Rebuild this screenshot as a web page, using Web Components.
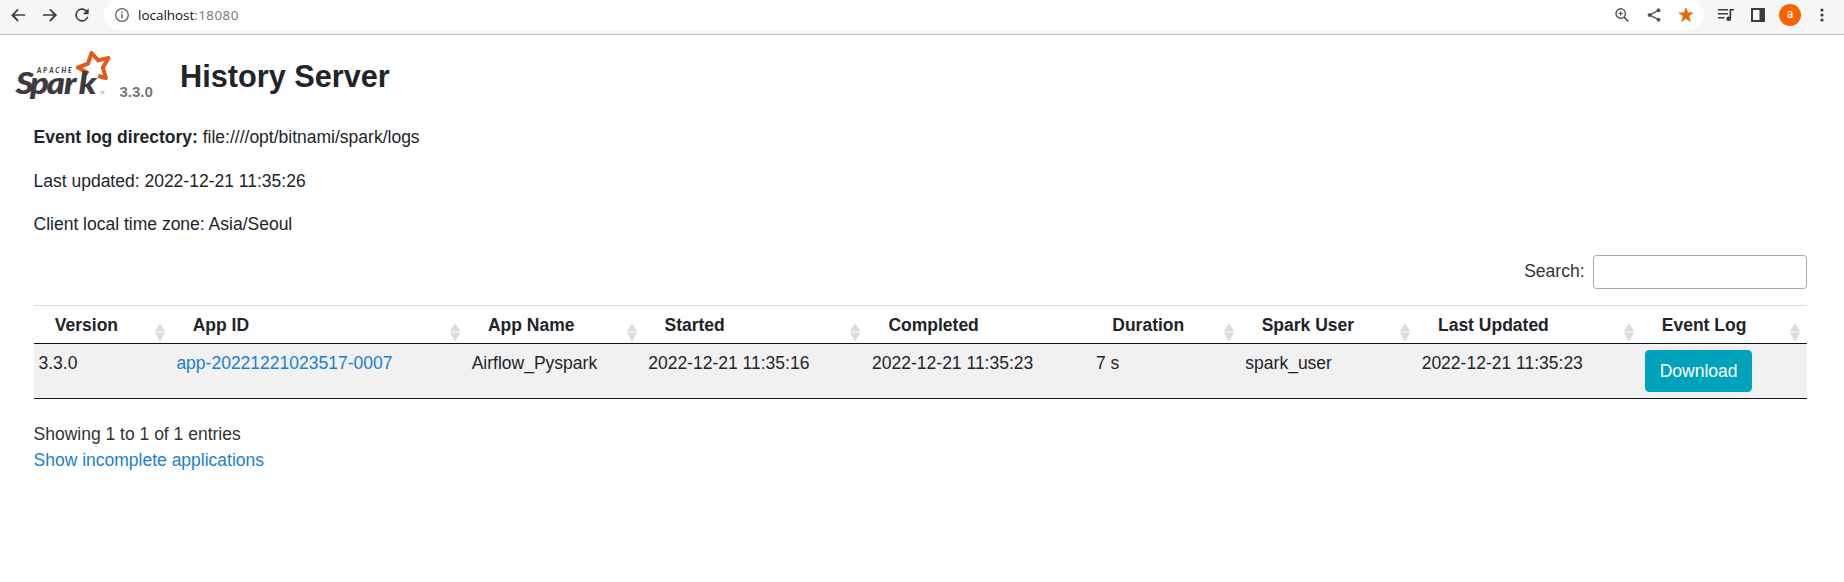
<!DOCTYPE html>
<html lang="en">
<head>
<meta charset="utf-8">
<title>History Server</title>
<style>
html,body{margin:0;padding:0;background:#fff}
body{font-family:"Liberation Sans",Arial,sans-serif;font-size:17.5px;line-height:26.4px;color:#212529;height:582px;overflow:hidden}
</style>
</head>
<body>
<history-page></history-page>
<script>
function define(name, html) {
  const tpl = document.createElement('template');
  tpl.innerHTML = html;
  customElements.define(name, class extends HTMLElement {
    connectedCallback() {
      if (this.shadowRoot) return;
      this.attachShadow({mode: 'open'}).appendChild(tpl.content.cloneNode(true));
    }
  });
}

define('browser-bar', `
<style>
:host{display:flex;box-sizing:border-box;height:35px;background:#f6f6f6;border-bottom:1px solid #bbb;align-items:flex-start}
svg{display:block;flex:none}
.nav{display:flex;gap:12px;padding:5px 13px 0 8px;width:104px;box-sizing:border-box}
.pill{display:flex;align-items:center;box-sizing:border-box;width:1600px;height:30px;border-radius:15px;background:#fff;padding:0 8px 0 10px;color:#111;font:13.5px/30px "Open Sans","Noto Sans",sans-serif}
.url{flex:1;padding-left:8px;letter-spacing:-.03px}
.url span{color:#777;letter-spacing:.4px}
.acts,.tools{display:flex;align-items:center;gap:12px}
.tools{height:30px;padding-left:12px}
.av{width:22px;height:22px;margin:0 -1px;border-radius:50%;background:#f96302;color:#fff;font:12px/21px Roboto,sans-serif;text-align:center}
</style>
<div class="nav">
<svg width="20" height="20" viewBox="0 0 24 24" fill="#3c3c3c"><path d="M20.500 11H7.830l5.090-5.090L11.500 4.500 3.500 12.500l0-.5 8 8 1.420-1.420L7.830 13H20.500z"/></svg>
<svg width="20" height="20" viewBox="0 0 24 24" fill="#3c3c3c"><path d="M3.500 11H16.200l-5.100-5.090L12.500 4.500 20.500 12l-8 8-1.400-1.420L16.200 13H3.500z"/></svg>
<svg width="20" height="20" viewBox="0 0 24 24" fill="#3c3c3c"><path d="M17.650 6.350A8 8 0 1 0 19.730 14h-2.080A6 6 0 1 1 12 6c1.660 0 3.140.69 4.220 1.780L13 11h7V4z"/></svg>
</div>
<div class="pill">
<svg width="16" height="16" viewBox="0 0 16 16" fill="none" stroke="#5f6368"><circle cx="8" cy="8" r="6.300" stroke-width="1.300"/><path d="M8 7.200v4.100M8 4.600v1.500" stroke-width="1.500"/></svg>
<div class="url">localhost<span>:18080</span></div>
<div class="acts">
<svg width="20" height="20" viewBox="0 0 20 20" fill="none" stroke="#4d5053" stroke-width="1.400"><circle cx="8.700" cy="8.500" r="4.700"/><path d="M12 12l4.300 4.300" stroke-width="1.700"/><path d="M8.700 6.300v4.400M6.500 8.500h4.400" stroke-width="1.200"/></svg>
<svg width="20" height="20" viewBox="0 0 20 20" fill="#4d5053" stroke="#4d5053"><path d="M14.400 5.400L5.800 10l8.600 4.700" fill="none" stroke-width="1.400"/><circle cx="14.500" cy="5.300" r="1.500"/><circle cx="5.600" cy="10" r="1.500"/><circle cx="14.500" cy="14.700" r="1.500"/></svg>
<svg width="20" height="20" viewBox="0 0 20 20" fill="#df6b0b"><path d="M10 2.800l1.900 5h5.100l-4.100 3.200 1.600 5.600L10 13.500 5.500 16.600l1.600-5.600L3 7.800h5.100z" stroke="#df6b0b" stroke-width=".6"/></svg>
</div>
</div>
<div class="tools">
<svg width="20" height="20" viewBox="0 0 20 20" fill="#3c3c3c"><path d="M2 4h10v1.500H2zM2 8h10v1.500H2zM2 12h6.500v1.500H2zM13.500 4H18v1.600h-2.800v8.200a2.400 2.300 0 1 1-1.700-2.200z"/></svg>
<svg width="20" height="20" viewBox="0 0 20 20"><path d="M4 4h12v12H4z" fill="none" stroke="#3c3c3c" stroke-width="2"/><path d="M11.500 4H16v12h-4.500z" fill="#3c3c3c"/></svg>
<div class="av">a</div>
<svg width="20" height="20" viewBox="0 0 20 20" fill="#3c3c3c"><circle cx="10" cy="5" r="1.600"/><circle cx="10" cy="10" r="1.600"/><circle cx="10" cy="15" r="1.600"/></svg>
</div>`);

define('spark-logo', `
<style>:host{display:block;width:98px;height:55px}svg{display:block}</style>
<svg width="98" height="55" viewBox="15 49 98 55">
<path d="M88.500 73.500L77.700 67.600 88 63.600 91.500 53 98.200 60.400 108.500 58 102.800 67.700 106 78 98 76" fill="#fff" stroke="#e25a1c" stroke-width="4" stroke-linejoin="round"/>
<g fill="#3c3a3e" font-family="Lato, sans-serif" font-weight="900" font-style="italic">
<text transform="scale(1.120 1)" y="93.700" font-size="31" x="14 26.900 41.700 57.200 70.300" stroke="#3c3a3e" stroke-width=".2">Spark</text>
<text y="73" x="37 43 49.200 55.300 61.500 68" font-size="6.600">APACHE</text>
</g>
<text x="100" y="93.500" font-size="3" fill="#777" font-family="Liberation Sans, sans-serif">TM</text>
</svg>`);

define('page-header', `
<style>
:host{display:flex;height:69px;padding:14px 0 0 15px;box-sizing:border-box;margin-bottom:20px}
.v{font-size:15px;line-height:24px;font-weight:700;color:#777;margin:31px 0 0 6.500px;width:60.500px}
h3{margin:9px 0 0;font-size:30.700px;line-height:37px;font-weight:700;white-space:nowrap}
</style>
<spark-logo></spark-logo><div class="v"><slot name="version"></slot></div><h3><slot></slot></h3>`);

define('info-line', `
<style>:host{display:block;margin-bottom:17.300px}::slotted(strong){font-weight:700}</style><slot></slot>`);

define('search-box', `
<style>
:host{display:flex;justify-content:flex-end;align-items:center;gap:8.500px;height:34px;color:#333}
label{line-height:30px;padding-bottom:3px}
input{box-sizing:border-box;width:214px;height:34px;border:1px solid #aaa;border-radius:3.300px;background:#fff;padding:5px;font:inherit;margin:0}
</style><label for="q">Search:</label><input id="q" type="text">`);

define('head-cell', `
<style>
:host{display:flex;justify-content:space-between;font-weight:700;padding:0 5.700px 0 21.300px;line-height:26px;min-width:0;white-space:nowrap}
svg{display:block;flex:none;margin-top:10px}
:host([sorted]) svg{display:none}
</style><span><slot></slot></span>
<svg width="12" height="20" viewBox="0 0 12 20" fill="#dcdcdc"><path d="M6 1l5.200 8.500H.8zM6 19.500L.8 10.500h10.400z"/></svg>`);

define('body-cell', `
<style>:host{display:block;padding:6px 0 0 5px;white-space:nowrap;min-width:0}</style><slot></slot>`);

define('app-link', `
<style>:host{color:#1a7fd0}a{color:inherit;text-decoration:none}</style><a href="#"><slot></slot></a>`);

define('download-button', `
<style>:host{display:block;margin-left:-.4px}a{display:block;box-sizing:border-box;width:107px;height:42px;border-radius:4.400px;background:#00a2bc;color:#fff;text-align:center;line-height:42px;text-decoration:none}</style><a href="#"><slot></slot></a>`);

define('apps-table', `
<style>
:host{display:block;margin-top:16px}
.row{display:grid;grid-template-columns:137.900px 295.300px 176.500px 223.900px 223.900px 149.400px 176.300px 223.800px 1fr}
.head{height:39px;box-sizing:border-box;border-top:1px solid #ddd;border-bottom:1px solid #111;padding-top:6px}
.body{height:55px;box-sizing:border-box;background:linear-gradient(#f9f9f9,#f9f9f9) 0 100%/100% 1px no-repeat #f1f1f1;border-bottom:1px solid #111}
</style>
<div class="row head">
<head-cell>Version</head-cell><head-cell>App ID</head-cell><head-cell>App Name</head-cell><head-cell>Started</head-cell><head-cell sorted>Completed</head-cell><head-cell>Duration</head-cell><head-cell>Spark User</head-cell><head-cell>Last Updated</head-cell><head-cell>Event Log</head-cell>
</div>
<div class="row body">
<body-cell>3.3.0</body-cell><body-cell><app-link>app-20221221023517-0007</app-link></body-cell><body-cell>Airflow_Pyspark</body-cell><body-cell>2022-12-21 11:35:16</body-cell><body-cell>2022-12-21 11:35:23</body-cell><body-cell>7 s</body-cell><body-cell>spark_user</body-cell><body-cell>2022-12-21 11:35:23</body-cell><body-cell><download-button>Download</download-button></body-cell>
</div>`);

define('history-page', `
<style>
:host{display:block}
main{padding:0 37px 0 33.500px}
search-box{margin-top:17px}
.foot{padding-top:22px;color:#333}
.foot div{height:25.500px}
</style>
<browser-bar></browser-bar>
<page-header><span slot="version">3.3.0</span>History Server</page-header>
<main>
<info-line><strong>Event log directory:</strong> file:////opt/bitnami/spark/logs</info-line>
<info-line>Last updated: 2022-12-21 11:35:26</info-line>
<info-line>Client local time zone: Asia/Seoul</info-line>
<search-box></search-box>
<apps-table></apps-table>
<div class="foot"><div>Showing 1 to 1 of 1 entries</div><app-link>Show incomplete applications</app-link></div>
</main>`);
</script>
</body>
</html>
